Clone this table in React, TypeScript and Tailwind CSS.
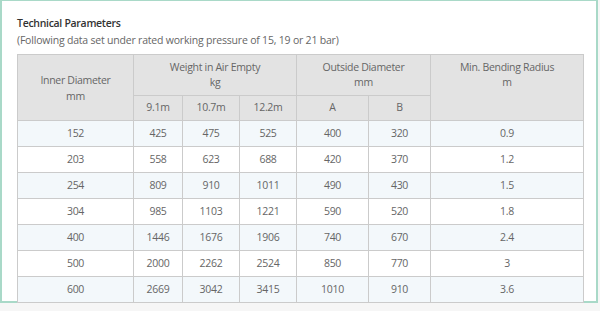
import * as React from 'react';

const rows = [
  ['152', '425', '475', '525', '400', '320', '0.9'],
  ['203', '558', '623', '688', '420', '370', '1.2'],
  ['254', '809', '910', '1011', '490', '430', '1.5'],
  ['304', '985', '1103', '1221', '590', '520', '1.8'],
  ['400', '1446', '1676', '1906', '740', '670', '2.4'],
  ['500', '2000', '2262', '2524', '850', '770', '3'],
  ['600', '2669', '3042', '3415', '1010', '910', '3.6'],
];

const widths = ['w-[116px]', 'w-[49px]', 'w-[57px]', 'w-[57px]', 'w-[72px]', 'w-[62px]', 'w-[153px]'];

export default function App() {
  return (
    <div className="w-[600px] h-[311px] bg-[#f6f6f6] overflow-hidden" style={{ fontFamily: '"Open Sans", "Noto Sans", sans-serif' }}>
      <div className="w-[598px] h-[303px] bg-white border-l-2 border-t border-r-2 border-b-2 border-[#a9d9c8] pl-[15px] pt-[14px]">
        <div className="text-[10.5px] font-semibold text-[#333] leading-[16px] tracking-[-0.3px]">Technical Parameters</div>
        <div className="text-[10.5px] text-[#666] leading-[16px] mt-[1px] tracking-[-0.2px]">
          (Following data set under rated working pressure of 15, 19 or 21 bar)
        </div>
        <table className="mt-[6px] border-collapse text-[10.5px] text-[#666] text-center tracking-[-0.3px]">
          <thead>
            <tr className="bg-[#e3e3e3] h-[41px]">
              <th rowSpan={2} className="font-normal border border-[#cbcbcb] leading-[16px] w-[116px]">
                Inner Diameter
                <br />
                mm
              </th>
              <th colSpan={3} className="font-normal border border-[#cbcbcb] leading-[15px]">
                Weight in Air Empty
                <br />
                kg
              </th>
              <th colSpan={2} className="font-normal border border-[#cbcbcb] leading-[15px]">
                Outside Diameter
                <br />
                mm
              </th>
              <th rowSpan={2} className="font-normal border border-[#cbcbcb] leading-[15px] align-top pt-[5px] w-[153px]">
                Min. Bending Radius
                <br />
                m
              </th>
            </tr>
            <tr className="bg-[#e3e3e3] h-[25px]">
              <th className="font-normal border border-[#cbcbcb] w-[49px]">9.1m</th>
              <th className="font-normal border border-[#cbcbcb] w-[57px]">10.7m</th>
              <th className="font-normal border border-[#cbcbcb] w-[57px]">12.2m</th>
              <th className="font-normal border border-[#cbcbcb] w-[72px]">A</th>
              <th className="font-normal border border-[#cbcbcb] w-[62px]">B</th>
            </tr>
          </thead>
          <tbody>
            {rows.map((r, i) => (
              <tr key={r[0]} className={i % 2 === 0 ? 'bg-[#f3f8fb] h-[26px]' : 'bg-white h-[26px]'}>
                {r.map((c, j) => (
                  <td key={j} className={`border border-[#cbcbcb] ${widths[j]}`}>
                    {c}
                  </td>
                ))}
              </tr>
            ))}
          </tbody>
        </table>
      </div>
    </div>
  );
}
